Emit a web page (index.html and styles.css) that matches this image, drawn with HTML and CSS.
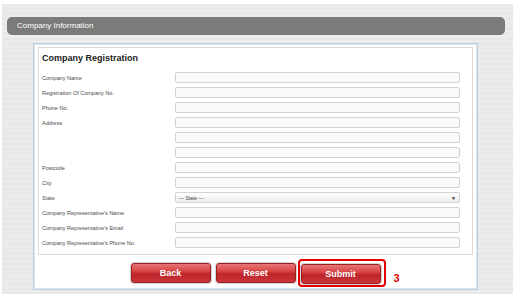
FILE: index.html
```html
<!DOCTYPE html>
<html lang="en">
<head>
    <meta charset="UTF-8">
    <meta name="viewport" content="width=device-width, initial-scale=1.0">
    <title>Company Information</title>
    <link rel="stylesheet" href="styles.css">
</head>
<body>
    <div class="page">
        <div class="titlebar">Company Information</div>

        <div class="panel">
            <div class="form-box">
                <h2>Company Registration</h2>

                <!-- registration fields -->
                <form class="fields">
                    <label>Company Name</label>
                    <input type="text">
                    <label>Registration Of Company No.</label>
                    <input type="text">
                    <label>Phone No.</label>
                    <input type="text">
                    <label>Address</label>
                    <input type="text">
                    <span></span>
                    <input type="text">
                    <span></span>
                    <input type="text">
                    <label>Postcode</label>
                    <input type="text">
                    <label>City</label>
                    <input type="text">
                    <label>State</label>
                    <div class="select">— State —<span class="arrow">▼</span></div>
                    <label>Company Representative's Name</label>
                    <input type="text">
                    <label>Company Representative's Email</label>
                    <input type="text">
                    <label>Company Representative's Phone No.</label>
                    <input type="text">
                </form>
            </div>

            <div class="actions">
                <button type="button" class="button">Back</button>
                <button type="button" class="button">Reset</button>
                <div class="marked">
                    <button type="submit" class="button">Submit</button>
                    <span class="step">3</span>
                </div>
            </div>
        </div>
    </div>
</body>
</html>
```

FILE: styles.css
```css
* {
    margin: 0;
    padding: 0;
    box-sizing: border-box;
}

body {
    font-family: 'Liberation Sans', Arial, sans-serif;
    background: #fff;
    width: 518px;
    height: 301px;
    overflow: hidden;
}

.page {
    margin: 4px 5px 0 2px;
    height: 290px;
    padding: 13px 8px 0 5px;
    background: repeating-linear-gradient(180deg, #e6e6e6 0, #e6e6e6 1px, #ececec 1px, #ececec 3px, #e9e9e9 3px, #e9e9e9 5px);
}

.titlebar {
    height: 18px;
    line-height: 18px;
    padding-left: 10px;
    background: #7b7b7b;
    border-radius: 5px;
    color: #fff;
    font-size: 8px;
}

.panel {
    margin: 8px 27px 0 26px;
    height: 247px;
    background: #fff;
    border: 1px solid #b6cde2;
    box-shadow: inset 0 0 0 1px #dde6ee;
    padding: 3px 4px 0 4px;
}

.form-box {
    border: 1px solid #d9d9d9;
    padding: 5px 12px 6px 3px;
}

h2 {
    font-size: 9px;
    line-height: 11px;
    color: #222;
    margin-bottom: 8px;
}

.fields {
    display: grid;
    grid-template-columns: 133px 1fr;
    grid-auto-rows: 11px;
    row-gap: 4px;
    align-items: center;
}

.fields label {
    font-size: 5.5px;
    color: #4a4a4a;
}

.fields input,
.select {
    height: 11px;
    width: 100%;
    border: 1px solid #d2d2d2;
    border-radius: 2px;
    background: #fafafa;
}

.select {
    display: flex;
    align-items: center;
    justify-content: space-between;
    padding: 0 3px;
    font-size: 5px;
    color: #444;
    background: linear-gradient(#ffffff, #ececec);
}

.select .arrow {
    font-size: 5px;
    color: #333;
}

.actions {
    display: flex;
    justify-content: center;
    gap: 5px;
    margin-top: 8px;
}

.button {
    width: 80px;
    height: 20px;
    border: 1px solid #9d1c20;
    border-radius: 3px;
    box-shadow: 0 0 0 1px #d6d6d6;
    background: linear-gradient(#e87676 0%, #d84444 40%, #bc2429 55%, #c9373b 100%);
    color: #fff;
    font-family: 'Liberation Sans', Arial, sans-serif;
    font-size: 9px;
    font-weight: bold;
}

.marked {
    position: relative;
}

.marked::after {
    content: '';
    position: absolute;
    left: -3px;
    top: -4px;
    right: -5px;
    bottom: -3px;
    border: 2px solid #e30000;
    border-radius: 4px;
}

.step {
    position: absolute;
    left: 93px;
    top: 9px;
    color: #e30000;
    font-size: 11px;
    font-weight: bold;
}
```
